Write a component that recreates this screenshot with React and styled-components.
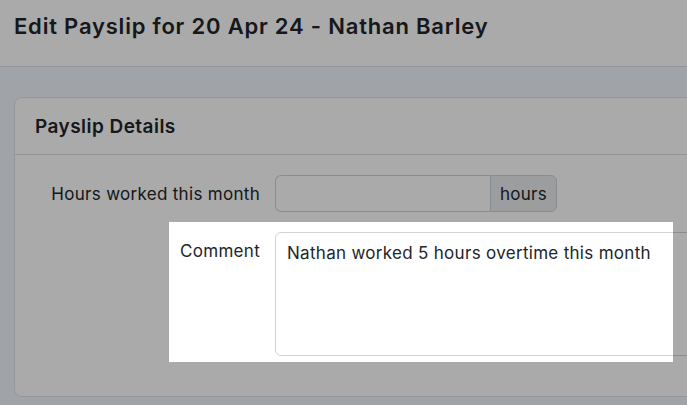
import React from 'react';
import styled, { createGlobalStyle } from 'styled-components';

const GlobalStyle = createGlobalStyle`
  html, body {
    margin: 0;
    padding: 0;
    overflow: hidden;
    background: #f1f5fb;
    font-family: Inter, "Liberation Sans", sans-serif;
    color: #212529;
  }
  * {
    box-sizing: border-box;
  }
`;

const Page = styled.div`
  min-height: 405px;
`;

const Header = styled.header`
  height: 67px;
  padding: 13px 14px 0;
  background: #ffffff;
  border-bottom: 1px solid #dfe2e6;
`;

const Title = styled.h1`
  margin: 0;
  font-size: 22px;
  line-height: 26px;
  font-weight: 600;
  letter-spacing: 0.8px;
`;

const Main = styled.main`
  padding: 30px 0 0 14px;
`;

const Card = styled.section`
  width: 880px;
  background: #ffffff;
  border: 1px solid #dee2e6;
  border-radius: 8px;
`;

const CardHeader = styled.div`
  height: 57px;
  padding: 0 20px;
  display: flex;
  align-items: center;
  border-bottom: 1px solid #dee2e6;
  font-size: 19px;
  font-weight: 600;
  letter-spacing: 0.45px;
`;

const CardBody = styled.div`
  padding: 20px 20px 40px;
  display: flex;
  flex-direction: column;
  gap: 20px;
`;

const FieldRow = styled.div`
  position: relative;
  display: flex;
  align-items: flex-start;
  gap: 15px;
`;

const Label = styled.label`
  width: 225px;
  flex-shrink: 0;
  padding-top: 7px;
  text-align: right;
  font-size: 17px;
  line-height: 24px;
  letter-spacing: 0.3px;
`;

const InputGroup = styled.div`
  display: flex;
  width: 282px;
  height: 37px;
`;

const TextInput = styled.input`
  flex: 1;
  min-width: 0;
  height: 100%;
  border: 1px solid #ced4da;
  border-right: none;
  border-radius: 6px 0 0 6px;
  background: #ffffff;
  font: inherit;
`;

const Addon = styled.span`
  width: 67px;
  display: flex;
  align-items: center;
  justify-content: center;
  border: 1px solid #ced4da;
  border-radius: 0 6px 6px 0;
  background: #e9ecef;
  font-size: 17px;
  letter-spacing: 0.3px;
`;

const TextArea = styled.textarea`
  width: 560px;
  height: 124px;
  padding: 8px 11px;
  border: 1px solid #ced4da;
  border-radius: 6px;
  background: #ffffff;
  resize: none;
  font-family: inherit;
  font-size: 17px;
  line-height: 24px;
  letter-spacing: 0.3px;
  color: #212529;
`;

const Spotlight = styled.div`
  position: absolute;
  top: ${(p) => p.top}px;
  left: ${(p) => p.left}px;
  width: ${(p) => p.width}px;
  height: ${(p) => p.height}px;
  box-shadow: 0 0 0 3000px rgba(0, 0, 0, 0.333);
  pointer-events: none;
  z-index: 10;
`;

export default function App() {
  return (
    <Page>
      <GlobalStyle />
      <Header>
        <Title>Edit Payslip for 20 Apr 24 - Nathan Barley</Title>
      </Header>
      <Main>
        <Card>
          <CardHeader>Payslip Details</CardHeader>
          <CardBody>
            <FieldRow>
              <Label>Hours worked this month</Label>
              <InputGroup>
                <TextInput type="text" />
                <Addon>hours</Addon>
              </InputGroup>
            </FieldRow>
            <FieldRow>
              <Label>Comment</Label>
              <TextArea defaultValue="Nathan worked 5 hours overtime this month" />
              <Spotlight top={-10} left={134} width={504} height={140} />
            </FieldRow>
          </CardBody>
        </Card>
      </Main>
    </Page>
  );
}
